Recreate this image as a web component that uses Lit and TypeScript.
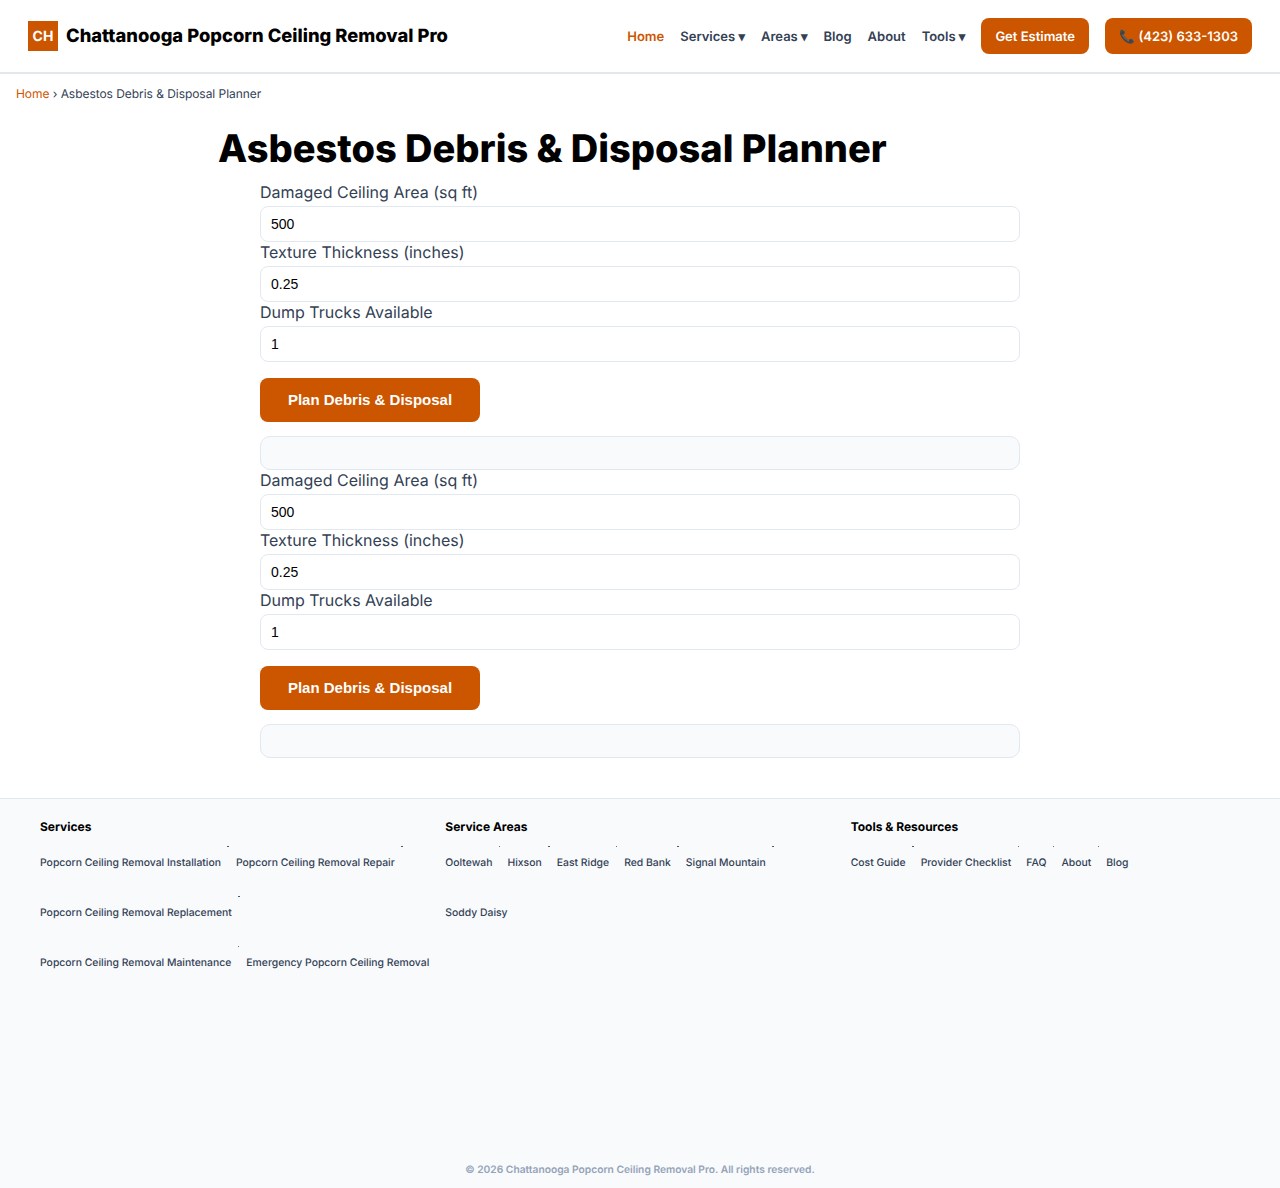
import { LitElement, html, css } from "lit";
import { customElement } from "lit/decorators.js";

const services = ["Popcorn Ceiling Removal Installation", "Popcorn Ceiling Removal Repair", "Popcorn Ceiling Removal Replacement", "Popcorn Ceiling Removal Maintenance", "Emergency Popcorn Ceiling Removal"];
const areas = ["Ooltewah", "Hixson", "East Ridge", "Red Bank", "Signal Mountain", "Soddy Daisy"];
const tools = ["Cost Guide", "Provider Checklist", "FAQ", "About", "Blog"];

@customElement("app-root")
export class AppRoot extends LitElement {
  static styles = css`
    :host { display: block; font-family: Inter, "Liberation Sans", sans-serif; color: #0f172a; background: #fff; text-rendering: geometricPrecision; }
    * { box-sizing: border-box; }
    a { text-decoration: none; color: inherit; }
    .hdr { height: 74px; border-bottom: 2px solid #e2e8f0; display: flex; align-items: center; justify-content: space-between; padding: 0 28px; }
    .brand { display: flex; align-items: center; gap: 8px; font-size: 18.35px; font-weight: 800; color: #000; }
    .logo { width: 30px; height: 30px; background: #cc5500; color: #fff; display: flex; align-items: center; justify-content: center; font-size: 14px; font-weight: 700; }
    nav { display: flex; align-items: center; gap: 16px; font-size: 13px; font-weight: 600; color: #334155; }
    nav a { padding-top: 2px; }
    nav .on { color: #cc5500; }
    .btn { background: #cc5500; color: #fff; height: 36px; padding: 2px 14px 0; border-radius: 8px; display: flex; align-items: center; }
    .crumb { padding: 12px 16px 0; font-size: 12px; line-height: 16px; color: #334155; height: 28px; letter-spacing: -0.05px; }
    .crumb a { color: #cc5500; }
    main { width: 844px; margin: 0 auto; }
    h1 { margin: 0; padding-top: 19px; font-size: 38px; line-height: 56px; font-weight: 800; color: #000; height: 80px; }
    .tool { width: 760px; margin: 0 auto; }
    label { display: block; font-size: 16px; line-height: 20px; height: 24px; color: #334155; }
    input { display: block; width: 100%; height: 36px; border: 1px solid #e2e8f0; border-radius: 8px; padding: 0 10px; font: 14px "Liberation Sans", Arial, sans-serif; color: #000; background: #fff; }
    button { display: block; margin-top: 16px; width: 220px; height: 44px; padding: 0 0 2px; border: 0; border-radius: 8px; background: #cc5500; color: #fff; font: bold 15px "Liberation Sans", Arial, sans-serif; }
    .result { margin-top: 14px; height: 34px; border: 1px solid #e2e8f0; border-radius: 10px; background: #f8fafc; }
    footer { margin-top: 40px; height: 390px; border-top: 1px solid #e2e8f0; background: #f8fafc; padding: 20px 40px 0; display: flex; flex-direction: column; justify-content: space-between; }
    .cols { display: grid; grid-template-columns: repeat(3, 1fr); gap: 16px; }
    h4 { margin: 0; font-size: 12px; line-height: 16px; font-weight: 700; color: #000; }
    ul { list-style: none; margin: 5px 0 0; padding: 0; display: flex; flex-wrap: wrap; column-gap: 15px; row-gap: 6px; }
    li { position: relative; }
    li:not(:last-child)::after { content: ""; position: absolute; right: -8px; top: 5.5px; width: 1.5px; height: 1.5px; border-radius: 50%; background: #334155; }
    li a { display: flex; align-items: center; height: 44px; font-size: 10.4px; font-weight: 500; color: #334155; }
    .copy { height: 26px; text-align: center; font-size: 10.25px; line-height: 16px; font-weight: 600; color: #94a3b8; }
  `;

  private tool() {
    return html`<div class="tool">
      <label>Damaged Ceiling Area (sq ft)</label><input value="500" />
      <label>Texture Thickness (inches)</label><input value="0.25" />
      <label>Dump Trucks Available</label><input value="1" />
      <button>Plan Debris &amp; Disposal</button>
      <div class="result"></div>
    </div>`;
  }

  private list(items: string[]) {
    return html`<ul>${items.map((i) => html`<li><a href="#">${i}</a></li>`)}</ul>`;
  }

  render() {
    return html`
      <header class="hdr">
        <a class="brand" href="#"><span class="logo">CH</span>Chattanooga Popcorn Ceiling Removal Pro</a>
        <nav>
          <a class="on" href="#">Home</a>
          <a href="#">Services ▾</a>
          <a href="#">Areas ▾</a>
          <a href="#">Blog</a>
          <a href="#">About</a>
          <a href="#">Tools ▾</a>
          <a class="btn" href="#">Get Estimate</a>
          <a class="btn" href="#">📞 (423) 633-1303</a>
        </nav>
      </header>
      <div class="crumb"><a href="#">Home</a> › Asbestos Debris &amp; Disposal Planner</div>
      <main>
        <h1>Asbestos Debris &amp; Disposal Planner</h1>
        ${this.tool()}${this.tool()}
      </main>
      <footer>
        <div class="cols">
          <div><h4>Services</h4>${this.list(services)}</div>
          <div><h4>Service Areas</h4>${this.list(areas)}</div>
          <div><h4>Tools &amp; Resources</h4>${this.list(tools)}</div>
        </div>
        <div class="copy">© 2026 Chattanooga Popcorn Ceiling Removal Pro. All rights reserved.</div>
      </footer>
    `;
  }
}
